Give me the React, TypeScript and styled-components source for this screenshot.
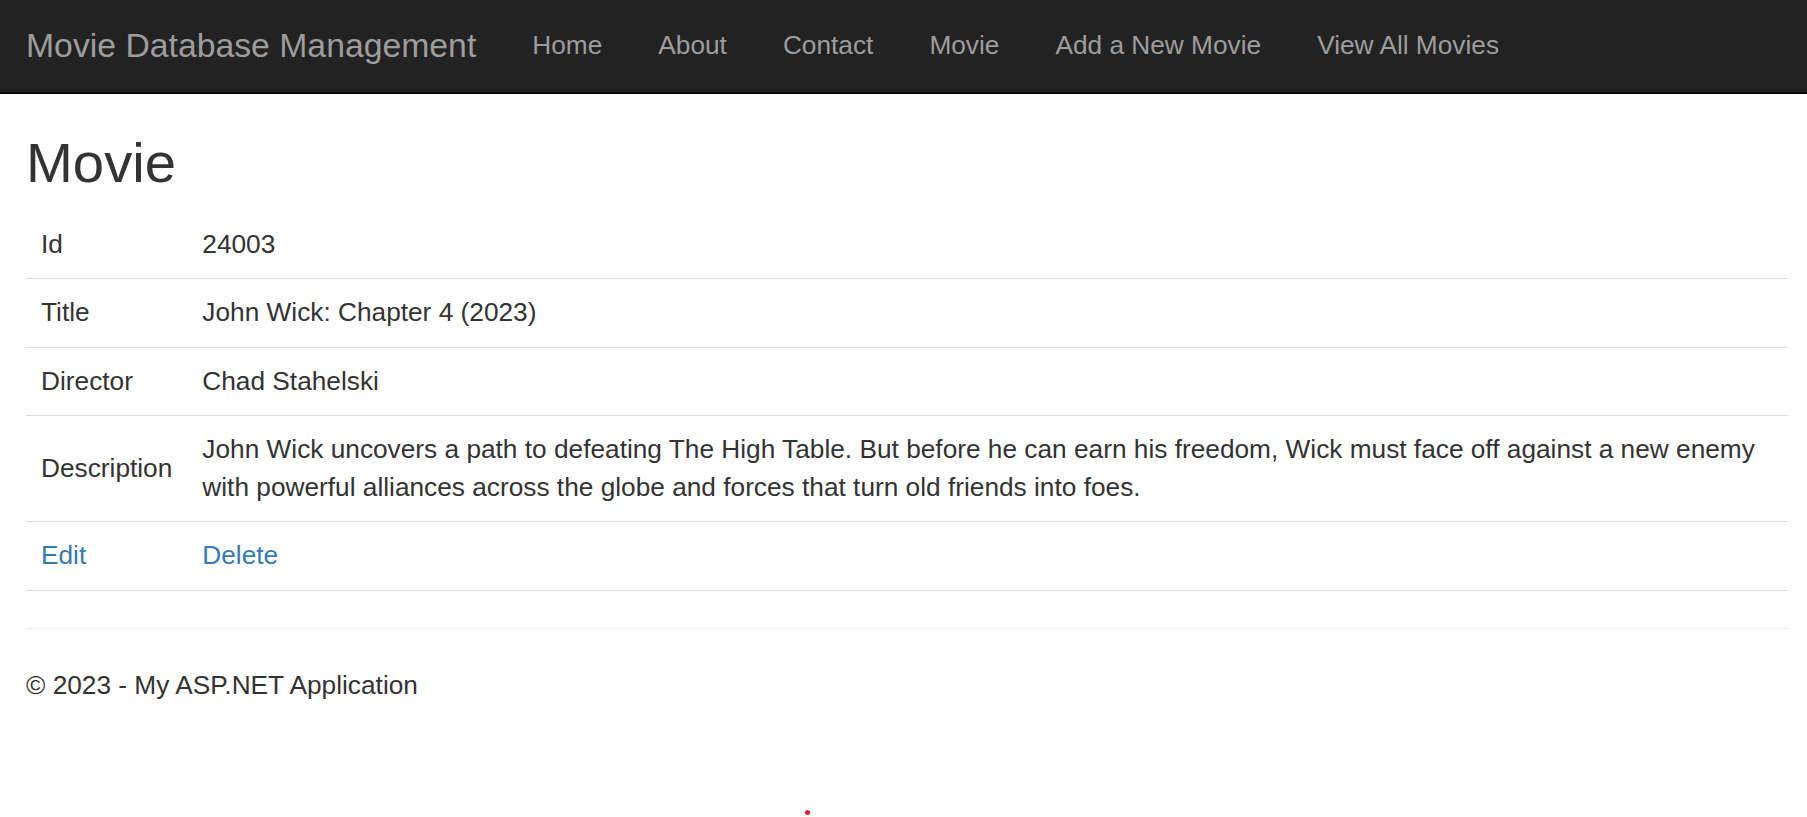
import React from 'react';
import styled, { createGlobalStyle } from 'styled-components';

const GlobalStyle = createGlobalStyle`
  * {
    box-sizing: border-box;
  }

  html,
  body {
    margin: 0;
    padding: 0;
    background: #fff;
  }

  body {
    font-family: "Liberation Sans", Arial, Helvetica, sans-serif;
    font-size: 26.25px;
    line-height: 37.5px;
    color: #333;
  }

  a {
    text-decoration: none;
  }
`;

const Page = styled.div`
  position: relative;
  min-height: 817px;
`;

const Navbar = styled.nav`
  display: flex;
  align-items: flex-start;
  height: 94px;
  padding-left: 26px;
  background-color: #222;
  border-bottom: 2px solid #080808;
`;

const Brand = styled.a`
  font-size: 33.75px;
  line-height: 90px;
  color: #9d9d9d;
  padding-right: 28px;
  white-space: nowrap;
`;

const NavList = styled.ul`
  display: flex;
  margin: 0;
  padding: 0;
  list-style: none;
`;

const NavLink = styled.a`
  display: block;
  padding: 0 28px;
  line-height: 90px;
  color: #9d9d9d;
  white-space: nowrap;
`;

const BodyContent = styled.main`
  padding: 0 19px 0 26px;
`;

const Heading = styled.h2`
  margin: 37.5px 0 17px;
  font-size: 56.25px;
  line-height: 62px;
  font-weight: 500;
  color: #333;
`;

const DetailsTable = styled.table`
  width: 100%;
  border-collapse: collapse;
  border-spacing: 0;
`;

const Row = styled.tr`
  border-bottom: 1px solid #ddd;
`;

const Cell = styled.td<{ $label?: boolean }>`
  padding: 15px;
  vertical-align: middle;
  white-space: ${(p) => (p.$label ? 'nowrap' : 'normal')};
  width: ${(p) => (p.$label ? '1%' : 'auto')};
`;

const ActionLink = styled.a`
  color: #337ab7;
`;

const Rule = styled.hr`
  margin: 37.5px 0;
  border: 0;
  border-top: 1px solid #eee;
`;

const Footer = styled.footer`
  p {
    margin: 0 0 18.75px;
  }
`;

const CursorDot = styled.span`
  position: absolute;
  left: 805px;
  top: 810px;
  width: 5px;
  height: 5px;
  border-radius: 50%;
  background-color: #e52222;
`;

const navItems = ['Home', 'About', 'Contact', 'Movie', 'Add a New Movie', 'View All Movies'];

const movie = {
  id: 24003,
  title: 'John Wick: Chapter 4 (2023)',
  director: 'Chad Stahelski',
  description:
    'John Wick uncovers a path to defeating The High Table. But before he can earn his freedom, Wick must face off against a new enemy with powerful alliances across the globe and forces that turn old friends into foes.',
};

const App = () => {
  const rows: [string, React.ReactNode][] = [
    ['Id', movie.id],
    ['Title', movie.title],
    ['Director', movie.director],
    ['Description', movie.description],
  ];

  return (
    <>
      <GlobalStyle />
      <Page>
        <Navbar>
          <Brand href="#">Movie Database Management</Brand>
          <NavList>
            {navItems.map((item) => (
              <li key={item}>
                <NavLink href="#">{item}</NavLink>
              </li>
            ))}
          </NavList>
        </Navbar>
        <BodyContent>
          <Heading>Movie</Heading>
          <DetailsTable>
            <tbody>
              {rows.map(([label, value]) => (
                <Row key={label}>
                  <Cell $label>{label}</Cell>
                  <Cell>{value}</Cell>
                </Row>
              ))}
              <Row>
                <Cell $label>
                  <ActionLink href="#">Edit</ActionLink>
                </Cell>
                <Cell>
                  <ActionLink href="#">Delete</ActionLink>
                </Cell>
              </Row>
            </tbody>
          </DetailsTable>
          <Rule />
          <Footer>
            <p>© 2023 - My ASP.NET Application</p>
          </Footer>
        </BodyContent>
        <CursorDot />
      </Page>
    </>
  );
};

export default App;
